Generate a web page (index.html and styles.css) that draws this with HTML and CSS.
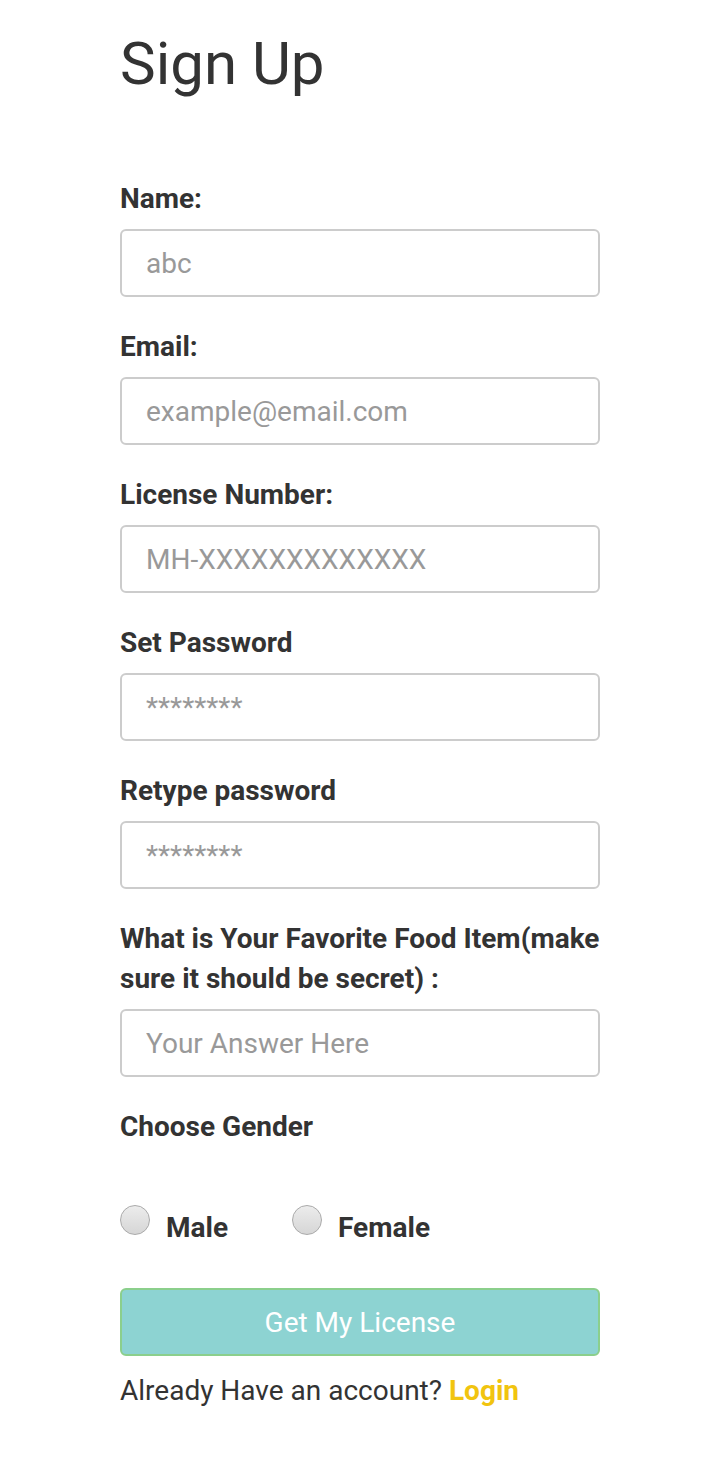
FILE: index.html
```html
<!DOCTYPE html>
<html>
<head>
<meta charset="utf-8">
<link rel="stylesheet" href="styles.css">
</head>
<body>
<div class="page">
  <h1 class="title">Sign Up</h1>
  <form class="form">
    <div class="field">
      <label class="label">Name:</label>
      <input class="input" type="text" placeholder="abc">
    </div>
    <div class="field">
      <label class="label">Email:</label>
      <input class="input" type="text" placeholder="example@email.com">
    </div>
    <div class="field">
      <label class="label">License Number:</label>
      <input class="input" type="text" placeholder="MH-XXXXXXXXXXXXX">
    </div>
    <div class="field">
      <label class="label">Set Password</label>
      <input class="input" type="text" placeholder="********">
    </div>
    <div class="field">
      <label class="label">Retype password</label>
      <input class="input" type="text" placeholder="********">
    </div>
    <div class="field">
      <label class="label">What is Your Favorite Food Item(make sure it should be secret) :</label>
      <input class="input" type="text" placeholder="Your Answer Here">
    </div>
    <div class="field gender">
      <label class="label">Choose Gender</label>
      <div class="radios">
        <label class="radio-item"><input class="radio" type="radio" name="g"><span>Male</span></label>
        <label class="radio-item"><input class="radio" type="radio" name="g"><span>Female</span></label>
      </div>
    </div>
    <button class="btn" type="button">Get My License</button>
    <p class="footer">Already Have an account? <a class="login" href="#">Login</a></p>
  </form>
</div>
</body>
</html>
```
FILE: styles.css
```css
* { box-sizing: border-box; }
body {
  margin: 0;
  background: #fff;
  font-family: Roboto, "Liberation Sans", sans-serif;
  color: #333;
}
.page {
  width: 480px;
  margin: 0 auto;
  padding-top: 28px;
}
.title {
  margin: 0;
  font-size: 60px;
  font-weight: 400;
  line-height: 72px;
  color: #333;
}
.form {
  margin-top: 79px;
  display: flex;
  flex-direction: column;
}
.field {
  display: flex;
  flex-direction: column;
  margin-bottom: 30px;
}
.label {
  font-size: 28px;
  font-weight: 700;
  line-height: 40px;
  margin-bottom: 10px;
  color: #333;
}
.input {
  height: 68px;
  width: 100%;
  border: 2px solid #ccc;
  border-radius: 6px;
  padding: 0 24px;
  font-family: Roboto, "Liberation Sans", sans-serif;
  font-size: 28px;
  color: #333;
  outline: none;
}
.input::placeholder { color: #999; }
.gender .label { margin-bottom: 0; }
.radios {
  display: flex;
  gap: 64px;
  margin-top: 56px;
  align-items: center;
}
.radio-item {
  display: flex;
  align-items: center;
  gap: 16px;
  font-size: 28px;
  font-weight: 700;
  color: #333;
}
.radio-item span { position: relative; top: 8px; }
.radio {
  appearance: none;
  -webkit-appearance: none;
  margin: 0;
  width: 30px;
  height: 30px;
  border-radius: 50%;
  border: 1px solid #aaa;
  background: linear-gradient(#ececec, #d6d6d6);
}
.btn {
  margin-top: 22px;
  height: 68px;
  width: 100%;
  background: #8dd3d2;
  border: 2px solid #8bcf8c;
  border-radius: 6px;
  color: #fff;
  font-family: Roboto, "Liberation Sans", sans-serif;
  font-size: 28px;
}
.footer {
  margin: 15px 0 0;
  font-size: 28px;
  line-height: 40px;
  color: #333;
}
.login {
  color: #f1c40f;
  font-weight: 700;
  text-decoration: none;
}
```
